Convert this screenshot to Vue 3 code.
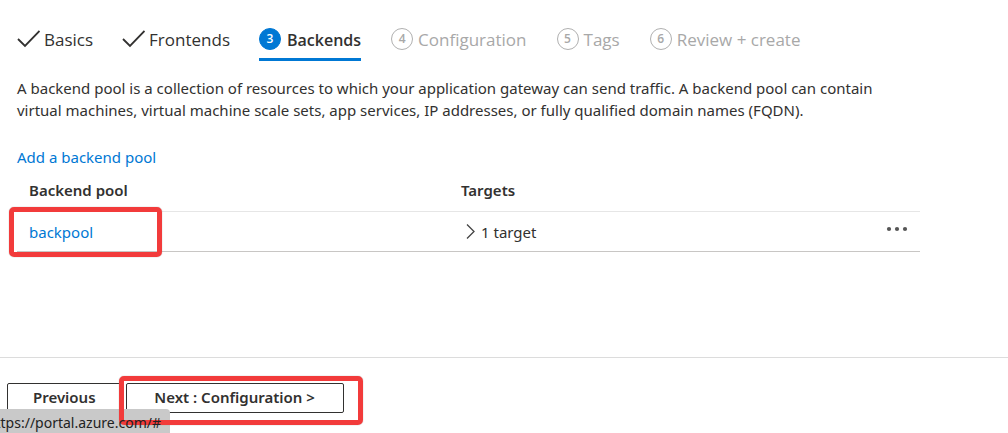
<script setup>
const steps = [
  { n: 1, label: 'Basics', state: 'done' },
  { n: 2, label: 'Frontends', state: 'done' },
  { n: 3, label: 'Backends', state: 'active' },
  { n: 4, label: 'Configuration', state: 'todo' },
  { n: 5, label: 'Tags', state: 'todo' },
  { n: 6, label: 'Review + create', state: 'todo' }
]
const pools = [{ name: 'backpool', targets: '1 target' }]
</script>

<template>
  <div class="page">
    <main class="content">
      <nav class="steps" aria-label="Steps">
        <button v-for="s in steps" :key="s.n" type="button" class="step" :class="s.state">
          <svg v-if="s.state === 'done'" class="check" width="23" height="20" viewBox="0 0 23 20" aria-hidden="true">
            <path d="M1 10 L8 17 L22.500 2" fill="none" stroke="#323130" stroke-width="1.800" />
          </svg>
          <span v-else class="num">{{ s.n }}</span>
          <span class="label">{{ s.label }}</span>
        </button>
      </nav>

      <p class="intro">
        A backend pool is a collection of resources to which your application gateway can send traffic. A backend pool can contain
        virtual machines, virtual machine scale sets, app services, IP addresses, or fully qualified domain names (FQDN).
      </p>

      <a class="add" href="#">Add a backend pool</a>

      <table class="grid">
        <thead>
          <tr>
            <th class="c-name" scope="col">Backend pool</th>
            <th scope="col">Targets</th>
            <th class="c-menu" scope="col" aria-label="Actions"></th>
          </tr>
        </thead>
        <tbody>
          <tr v-for="p in pools" :key="p.name">
            <td class="first"><a href="#">{{ p.name }}</a><span class="mark mark-row"></span></td>
            <td>
              <button type="button" class="expand">
                <svg width="10" height="16" viewBox="0 0 10 16" aria-hidden="true">
                  <path d="M1 0.500 L8 7.500 L1 14.500" fill="none" stroke="#444" stroke-width="1.300" />
                </svg>
                <span>{{ p.targets }}</span>
              </button>
            </td>
            <td class="menu">
              <button type="button" class="more" aria-label="More actions">
                <svg width="22" height="6" viewBox="0 0 22 6" aria-hidden="true">
                  <circle cx="3" cy="3" r="2.100" /><circle cx="11" cy="3" r="2.100" /><circle cx="19" cy="3" r="2.100" />
                </svg>
              </button>
            </td>
          </tr>
        </tbody>
      </table>
    </main>

    <footer class="footer">
      <button type="button" class="btn">Previous</button>
      <div class="next">
        <button type="button" class="btn btn-next">Next : Configuration &gt;</button>
        <span class="mark mark-next"></span>
      </div>
    </footer>
    <div class="status"><span>https://portal.azure.com/#</span></div>
  </div>
</template>

<style>
body { background: #fff; overflow: hidden; }
</style>

<style scoped>
* { box-sizing: border-box; }
.page {
  position: relative;
  display: flex;
  flex-direction: column;
  height: 100vh;
  overflow: hidden;
  color: #323130;
  font-family: "Noto Sans", "Open Sans", sans-serif;
  font-size: 15px;
  line-height: 22px;
}
button { font: inherit; color: inherit; background: none; border: 0; padding: 0; margin: 0; }
a { color: #0078d4; text-decoration: none; }
.content { flex: 1; padding: 24px 88px 0 17px; }
.steps { display: flex; gap: 29px; height: 37px; }
.step {
  display: flex;
  align-items: center;
  gap: 5px;
  height: 37px;
  padding-bottom: 5px;
  border-bottom: 3px solid transparent;
  font-family: "Open Sans", sans-serif;
  font-size: 17px;
  line-height: 24px;
  white-space: nowrap;
}
.label { padding-top: 2px; }
.done { gap: 4px; }
.todo { margin-left: 1px; color: #a8a8a8; }
.active { gap: 6px; border-color: #0078d4; font-size: 16px; font-weight: 600; }
.num {
  width: 22px;
  height: 22px;
  border: 1px solid #b0b0b0;
  border-radius: 50%;
  font-size: 12px;
  line-height: 20px;
  font-weight: 600;
  text-align: center;
}
.active .num { background: #0078d4; border-color: #0078d4; color: #fff; }
.intro { margin: 16px 0 0; }
.add { display: block; width: fit-content; margin-top: 25px; }
.grid { width: 100%; border-collapse: collapse; table-layout: fixed; }
th, td { padding: 2px 0 0 12px; text-align: left; }
th { height: 43px; font-weight: 600; border-bottom: 1px solid #e6e6e6; }
td { height: 40px; border-bottom: 1px solid #c8c6c4; }
.c-name { width: 432px; }
.c-menu { width: 60px; }
.first { position: relative; }
.expand { display: flex; align-items: center; gap: 5px; margin-left: 5px; }
.menu { padding: 0 12px 0 0; text-align: right; }
.more { display: block; margin: 0 0 4px auto; }
.more svg { display: block; fill: #555; }
.mark {
  position: absolute;
  border: 5px solid #f23b3b;
  border-radius: 5px;
  box-shadow: 0 0 1px #888;
  pointer-events: none;
}
.mark-row { left: -8px; top: -5px; width: 153px; height: 50px; }
.footer {
  display: flex;
  gap: 4px;
  height: 76px;
  padding: 25px 7px 0;
  border-top: 1px solid #dcdcdc;
}
.btn {
  height: 30px;
  padding: 0 25px 2px;
  border: 1px solid #323130;
  border-radius: 2px;
  font-weight: 600;
  line-height: 26px;
  white-space: nowrap;
}
.btn-next { min-width: 218px; }
.next { position: relative; height: 30px; }
.mark-next { z-index: 2; left: -7px; right: -19px; top: -7px; bottom: -12px; }
.status {
  position: absolute;
  left: 0;
  bottom: 0;
  display: flex;
  justify-content: flex-end;
  width: 170px;
  height: 24px;
  padding: 4px 9px 0 0;
  overflow: hidden;
  border-radius: 0 4px 0 0;
  background: #c9c9c9;
  color: #222;
  font-size: 14px;
  line-height: 20px;
  white-space: nowrap;
}
.status span { position: relative; z-index: 3; }
</style>
